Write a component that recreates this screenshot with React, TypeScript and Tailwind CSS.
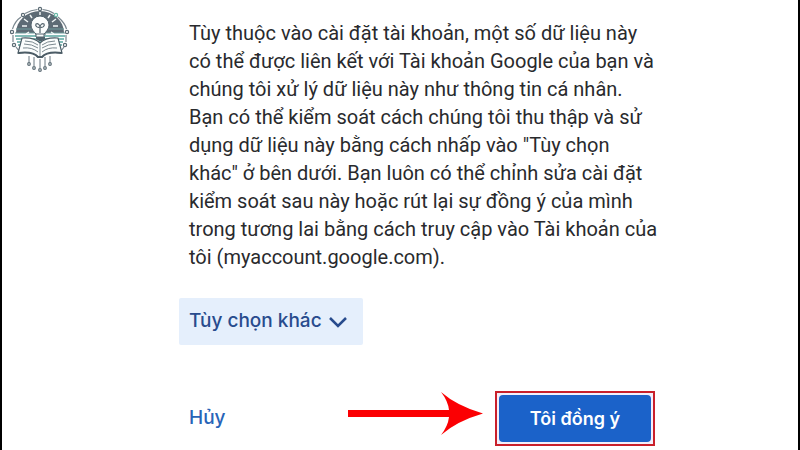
const SPOKES = [
  [23, 15],
  [40, 9],
  [56, 15],
  [12, 32],
  [67, 32],
  [14, 45],
  [65, 45],
]

const ROOTS = [
  [29, 64],
  [34, 68],
  [40, 70],
  [45, 68],
  [50, 64],
]

function Logo() {
  return (
    <svg viewBox="10 6 60 66" className="w-[60px] h-[66px]" fill="none" role="img" aria-label="Logo">
      {/* Disc with horizontal bands */}
      <path d="M16 33a24 22 0 0 1 48 0z" fill="#5d6b75" />
      <path d="M16 29h48M15 33h50" stroke="#6e9c9d" strokeWidth="1" />
      <path d="M15 36h50M16 39h48M17 42h46M18 45h44" stroke="#5ba6a1" strokeWidth="1.6" />
      <path
        d="M12.500 29Q15 21 21 17M25 13.500Q31 10 37.500 9.500M42.500 9.500Q49 10 54 13.500M58 17Q65 23 66.500 29M66 35v7M64 47l-3 4M13 35v7M16 47l3 4"
        stroke="#7a878f"
        strokeWidth="1.200"
      />

      {/* Bulb */}
      <path
        d="M36 37v-3c-2-2-5-5-5-9a9 9 0 0 1 18 0c0 4-3 7-5 9v3z"
        fill="#fbfdfd"
        stroke="#52636d"
        strokeWidth="1"
      />
      <path d="M40 33v-7m0 1c-3 1-5-1-4-3 2-1 4 1 4 3zm0 0c3 1 5-1 4-3-2-1-4 1-4 3z" stroke="#53646d" strokeWidth="1.200" />
      <path d="M36 37h9v2l-3 2h-3l-3-2z" fill="#52636d" />
      <path d="M35 34h11" stroke="#52636d" />
      <path
        d="M40 12v3M30 15l2 3M50 15l-2 3M24 19l4 3M56 19l-4 3M22 26h5M53 26h5M26 34l3-2M54 34l-3-2"
        stroke="#f0f5f5"
        strokeWidth="1.500"
      />

      {/* Book */}
      <path
        d="M22 38q12-1 18 5 6-6 18-5l4 15q-15-2-20 4h-4q-5-6-20-4z"
        fill="#fbfdfd"
        stroke="#4c5c66"
        strokeWidth="1.200"
      />
      <path
        d="M40 43v13M25 41q8 0 13 4M24 44q8 0 14 4M23 48q9-1 15 4M55 41q-8 0-13 4M56 44q-8 0-14 4M57 48q-9-1-15 4"
        stroke="#7b8990"
        strokeWidth="1"
      />
      <path d="M18 53q15-2 20 4h4q5-6 20-4" stroke="#4c5c66" strokeWidth="2" />

      {/* Circuit nodes */}
      <path d="M29 56v7M34 57v9M40 59v9M45 57v9M50 56v7" stroke="#687780" strokeWidth="1" />
      <g fill="#fff" stroke="#5b6b74" strokeWidth="1.200">
        {SPOKES.map(([cx, cy]) => (
          <circle key={`${cx}-${cy}`} cx={cx} cy={cy} r="1.600" className={cx === 56 ? 'stroke-[#69b9a7]' : ''} />
        ))}
        {ROOTS.map(([cx, cy]) => (
          <circle key={`${cx}-${cy}`} cx={cx} cy={cy} r="1.300" />
        ))}
      </g>
    </svg>
  )
}

function Arrow() {
  return (
    <svg viewBox="0 0 136 44" className="w-[136px] h-[44px]" aria-hidden="true">
      <path d="M1 19h101Q101 10 94 1 110 15 136 22.500 110 30 94 44 101 35 102 26H1z" fill="#fb0003" />
    </svg>
  )
}

export default function App() {
  return (
    <div className="flex min-h-screen border-x-2 border-black bg-white font-['Roboto','Noto_Sans',sans-serif]">
      <aside className="w-[175px] shrink-0 pt-1.5 pl-2">
        <Logo />
      </aside>

      <main className="max-w-[478px] flex-1 pt-[19px] pl-0.5">
        <p className="-mr-1 pl-2.5 text-xl leading-7 text-[#292a2d]">
          Tùy thuộc vào cài đặt tài khoản, một số dữ liệu này có thể được liên kết với Tài khoản Google của bạn và
          chúng tôi xử lý dữ liệu này như thông tin cá nhân. Bạn có thể kiểm soát cách chúng tôi thu thập và sử dụng dữ
          liệu này bằng cách nhấp vào "Tùy chọn khác" ở bên dưới. Bạn luôn có thể chỉnh sửa cài đặt kiểm soát sau này
          hoặc rút lại sự đồng ý của mình trong tương lai bằng cách truy cập vào Tài khoản của tôi
          (myaccount.google.com).
        </p>

        <button
          type="button"
          className="mt-[27px] flex h-[47px] w-[184px] items-center gap-1.5 rounded-xs bg-[#e5effc] px-2.5 font-['Inter','Noto_Sans',sans-serif] text-[19px] font-medium text-[#284b8d]"
        >
          Tùy chọn khác
          <svg viewBox="0 0 20 12" className="h-3 w-5" fill="none" stroke="currentColor" strokeWidth="2.500" aria-hidden="true">
            <path d="M2 2l8 8 8-8" />
          </svg>
        </button>

        <div className="mt-[46px] flex items-center justify-between">
          <button
            type="button"
            className="px-2.5 font-['Inter','Noto_Sans',sans-serif] text-[19px] font-medium text-[#2864b8]"
          >
            Hủy
          </button>
          <div className="flex items-start gap-3">
            <Arrow />
            <div className="border-2 border-[#c9202b] bg-[#f3effb] p-0.5">
              <button
                type="button"
                className="h-[47px] w-[152px] rounded-sm bg-[#1b62c9] font-['Inter','Noto_Sans',sans-serif] text-lg font-semibold text-white"
              >
                Tôi đồng ý
              </button>
            </div>
          </div>
        </div>
      </main>
    </div>
  )
}
